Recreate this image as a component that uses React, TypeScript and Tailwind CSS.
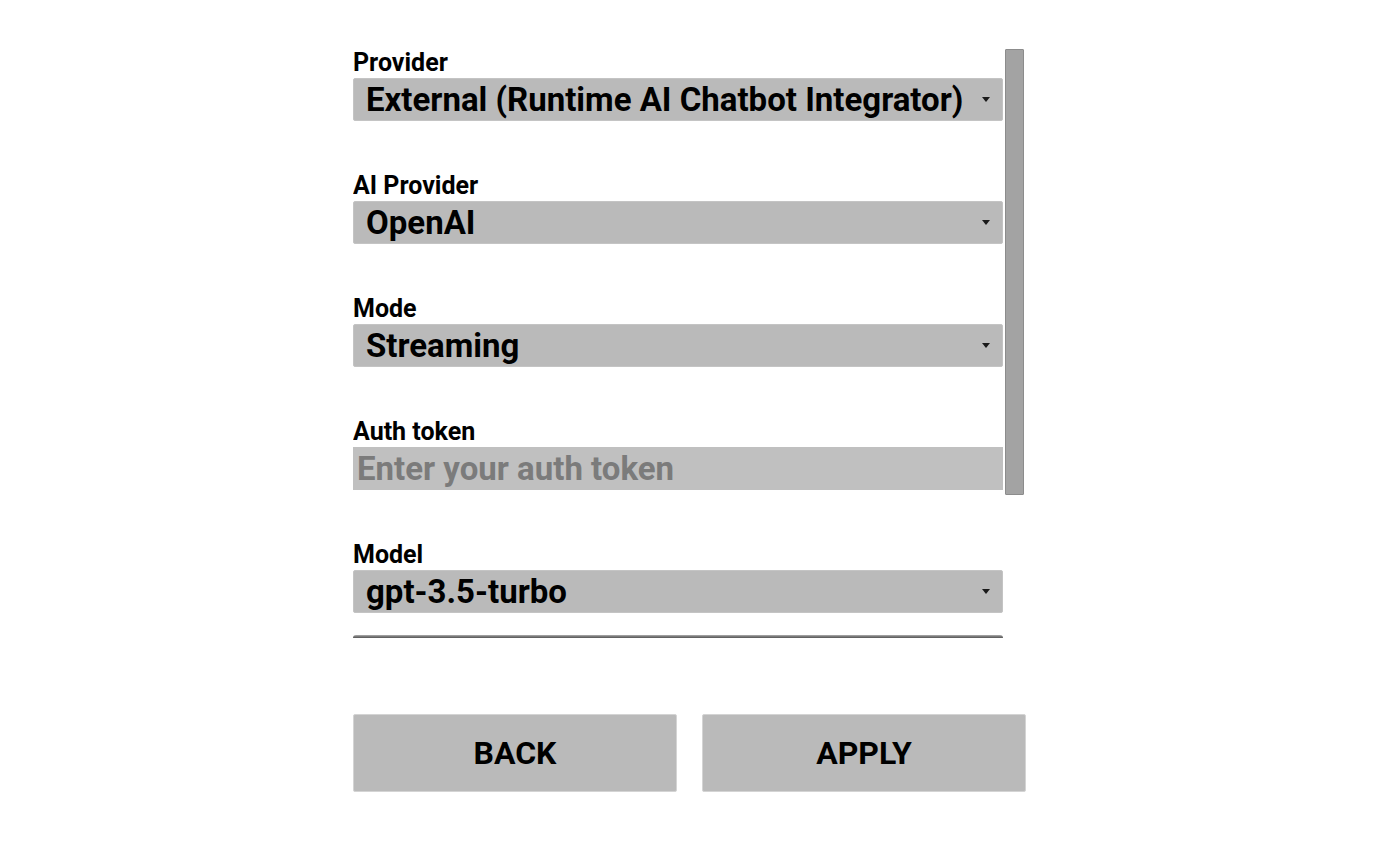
const fontStack = { fontFamily: "Roboto, 'Liberation Sans', sans-serif" };

interface SelectFieldProps {
  label: string;
  value: string;
}

const Caret = () => (
  <svg width="8" height="5" viewBox="0 0 8 5" className="shrink-0">
    <path d="M0 0H8L4 5Z" fill="#1a1a1a" />
  </svg>
);

const FieldLabel = ({ children }: { children: React.ReactNode }) => (
  <p className="text-[25px] font-bold leading-[28px] text-black pt-[3px] mb-[1px]">{children}</p>
);

const SelectField = ({ label, value }: SelectFieldProps) => (
  <div className="flex flex-col">
    <FieldLabel>{label}</FieldLabel>
    <div className="h-[43px] flex items-center justify-between bg-[#bababa] rounded-[2px] border border-[#c4c4c4] pl-[12px] pr-[12px]">
      <span className="text-[33px] font-bold leading-none text-black whitespace-nowrap">{value}</span>
      <Caret />
    </div>
  </div>
);

const TextField = ({ label, placeholder }: { label: string; placeholder: string }) => (
  <div className="flex flex-col">
    <FieldLabel>{label}</FieldLabel>
    <div className="h-[43px] flex items-center bg-[#c0c0c0] pl-[4px]">
      <span className="text-[33px] font-bold leading-none text-[#7b7b7b] whitespace-nowrap">{placeholder}</span>
    </div>
  </div>
);

export default function App() {
  return (
    <div className="min-h-screen w-full bg-white" style={fontStack}>
      <div className="mx-auto w-[673px] pt-[46px] flex flex-col">
        <div className="flex h-[592px] overflow-hidden">
          <div className="w-[650px] flex flex-col gap-[48px]">
            <SelectField label="Provider" value="External (Runtime AI Chatbot Integrator)" />
            <SelectField label="AI Provider" value="OpenAI" />
            <SelectField label="Mode" value="Streaming" />
            <TextField label="Auth token" placeholder="Enter your auth token" />
            <div className="flex flex-col gap-[22px]">
              <SelectField label="Model" value="gpt-3.5-turbo" />
              {/* top edge of the next, clipped field */}
              <div className="h-[4px] rounded-t-[3px] bg-gradient-to-b from-[#b0b0b0] via-[#6a6a6a] to-[#4a4a4a]" />
            </div>
          </div>
          <div className="ml-[2px] w-[19px] pt-[3px]">
            <div className="h-[446px] bg-[#a3a3a3] border border-[#8c8c8c] rounded-[1px]" />
          </div>
        </div>
        <div className="mt-[76px] flex gap-[25px]">
          <button className="w-[324px] h-[78px] bg-[#bababa] border border-[#d4d4d4] rounded-[2px] text-[32px] font-bold text-black">
            BACK
          </button>
          <button className="w-[324px] h-[78px] bg-[#bababa] border border-[#d4d4d4] rounded-[2px] text-[32px] font-bold text-black">
            APPLY
          </button>
        </div>
      </div>
    </div>
  );
}
